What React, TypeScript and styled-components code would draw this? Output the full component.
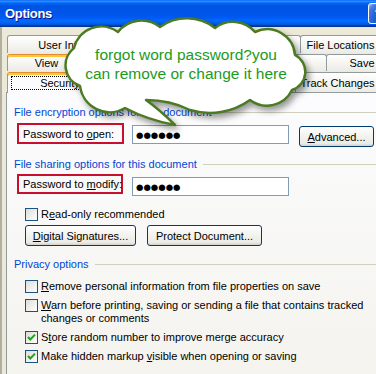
import { createGlobalStyle, styled } from "styled-components";

const GlobalStyle = createGlobalStyle`
	html, body {
		margin: 0;
		padding: 0;
		background: #f4f3ee;
		overflow: hidden;
	}
	body {
		font-family: "Liberation Sans", Arial, sans-serif;
		font-size: 11px;
		color: #000;
	}
`;

interface TabType {
	label: string;
	width: number;
	hot?: boolean;
	active?: boolean;
}

const TabRows: TabType[][] = [
	[
		{ label: "User Information", width: 144 },
		{ label: "Compatibility", width: 151 },
		{ label: "File Locations", width: 81 },
	],
	[
		{ label: "View", width: 79, hot: true },
		{ label: "General", width: 81 },
		{ label: "Edit", width: 61 },
		{ label: "Print", width: 102 },
		{ label: "Save", width: 72 },
	],
	[
		{ label: "Security", width: 106, hot: true, active: true },
		{ label: "Spelling & Grammar", width: 184 },
		{ label: "Track Changes", width: 85 },
	],
];

const RowHeights = [19, 18, 21];

// cloud outline, drawn in page coordinates (viewBox starts at 50,10)
const CLOUD =
	"M 80 86 A 22 22 0 0 1 74 48 A 28 28 0 0 1 118 32 A 30 30 0 0 1 160 27 " +
	"A 46 46 0 0 1 215 28 A 29 29 0 0 1 255 32 A 28 28 0 0 1 295 55 " +
	"A 19 19 0 0 1 292 90 A 28 28 0 0 1 250 100 A 69 69 0 0 1 190 110 " +
	"Q 170 100 146 100 Q 160 110 175 125 Q 148 120 125 108 " +
	"A 30 30 0 0 1 80 86 Z";

const Check = () => (
	<svg width="11" height="11" viewBox="0 0 11 11">
		<path d="M2 5 L4.3 7.5 L9 2.6" fill="none" stroke="#21a121" strokeWidth="2" />
	</svg>
);

interface CheckItemProps {
	checked?: boolean;
	top: number;
	children: React.ReactNode;
}

const CheckItem = ({ checked, top, children }: CheckItemProps) => (
	<CheckRow $top={top}>
		<CheckBox>{checked && <Check />}</CheckBox>
		<CheckLabel>{children}</CheckLabel>
	</CheckRow>
);

const App = () => {
	return (
		<Viewport>
			<GlobalStyle />
			<Window>
				<TitleBar>
					<Title>Options</Title>
					<HelpButton>?</HelpButton>
				</TitleBar>
				<Body>
					{TabRows.map((row, i) => (
						<TabRow key={i} $h={RowHeights[i]}>
							{row.map((tab) => (
								<Tab key={tab.label} $w={tab.width} $hot={tab.hot} $active={tab.active}>
									{tab.active ? <Focus>{tab.label}</Focus> : tab.label}
								</Tab>
							))}
						</TabRow>
					))}
					<Page>
						<GroupHeader $top={12}>File encryption options for this document</GroupHeader>
						<FieldRow $top={4}>
							<RedBox $w={107} $h={21}>
								<span>
									Password to <u>o</u>pen:
								</span>
							</RedBox>
							<PasswordBox $left={8} $top={2}>
								●●●●●●
							</PasswordBox>
							<XPButton $w={75} $left={10} $top={3}>
								<u>A</u>dvanced...
							</XPButton>
						</FieldRow>
						<GroupHeader $top={10}>File sharing options for this document</GroupHeader>
						<FieldRow $top={3}>
							<RedBox $w={106} $h={20}>
								<span>
									Password to <u>m</u>odify:
								</span>
							</RedBox>
							<PasswordBox $left={9} $top={3}>
								●●●●●●
							</PasswordBox>
						</FieldRow>
						<CheckItem top={12}>
							R<u>e</u>ad-only recommended
						</CheckItem>
						<ButtonRow>
							<XPButton $w={111}>
								<u>D</u>igital Signatures...
							</XPButton>
							<XPButton $w={115} $left={11}>
								Protect Document...
							</XPButton>
						</ButtonRow>
						<GroupHeader $top={11}>Privacy options</GroupHeader>
						<CheckItem top={9}>
							<u>R</u>emove personal information from file properties on save
						</CheckItem>
						<CheckItem top={6}>
							<u>W</u>arn before printing, saving or sending a file that contains tracked
							<br />
							changes or comments
						</CheckItem>
						<CheckItem checked top={6}>
							S<u>t</u>ore random number to improve merge accuracy
						</CheckItem>
						<CheckItem checked top={6}>
							Make hidden markup <u>v</u>isible when opening or saving
						</CheckItem>
					</Page>
				</Body>
			</Window>
			<Bubble>
				<CloudSvg viewBox="50 10 265 120" width="265" height="120">
					<path d={CLOUD} fill="#fff" stroke="#4b7a22" strokeWidth="2.5" strokeLinejoin="round" />
				</CloudSvg>
				<BubbleText>
					forgot word password?you
					<br />
					can remove or change it here
				</BubbleText>
			</Bubble>
		</Viewport>
	);
};
export default App;

const Viewport = styled.div`
	position: relative;
	width: 376px;
	height: 374px;
	overflow: hidden;
`;

const Window = styled.div`
	width: 400px;
	height: 374px;
	display: flex;
	flex-direction: column;
`;

const TitleBar = styled.div`
	height: 27px;
	flex-shrink: 0;
	display: flex;
	align-items: center;
	justify-content: space-between;
	padding: 0 11px 0 5px;
	background: linear-gradient(
		180deg,
		#0058ee 0%,
		#3593ff 4%,
		#288eff 6%,
		#127dff 8%,
		#036ffc 10%,
		#0262ee 14%,
		#0057e5 20%,
		#0054e3 24%,
		#0055eb 56%,
		#005bf5 66%,
		#026afe 76%,
		#0062ef 86%,
		#0052d6 92%,
		#0040ab 94%,
		#003092 100%
	);
`;

const Title = styled.span`
	color: #fff;
	font-weight: bold;
	font-size: 13px;
	letter-spacing: -0.3px;
	text-shadow: 1px 1px #0f1089;
`;

const HelpButton = styled.div`
	width: 21px;
	height: 21px;
	box-sizing: border-box;
	border: 1px solid #fff;
	border-radius: 3px;
	background: radial-gradient(circle at 90% 90%, #0054e9 0%, #2263d5 55%, #4479e4 80%, #a3bbec 100%);
	color: #fff;
	font-weight: bold;
	font-size: 13px;
	display: flex;
	align-items: center;
	justify-content: center;
`;

const Body = styled.div`
	flex: 1;
	display: flex;
	flex-direction: column;
	background: #ece9d8;
	padding: 8px 0 0 4px;
	border-left: 2px solid #b2afa0;
`;

const TabRow = styled.div<{ $h: number }>`
	display: flex;
	align-items: flex-start;
	height: ${(p) => p.$h}px;
	margin-left: 1px;
	position: relative;
	z-index: 2;
`;

const Tab = styled.div<{ $w: number; $hot?: boolean; $active?: boolean }>`
	width: ${(p) => p.$w}px;
	height: ${(p) => (p.$active ? "100%" : "calc(100% - 1px)")};
	box-sizing: border-box;
	flex-shrink: 0;
	margin-right: -1px;
	border: 1px solid #919b9c;
	border-bottom: none;
	border-top-color: ${(p) => (p.$hot ? "#e68b2c" : "#919b9c")};
	border-radius: 3px 3px 0 0;
	box-shadow: ${(p) => (p.$hot ? "inset 0 2px 0 #ffc83c" : "none")};
	background: ${(p) => (p.$active ? "#fcfcfe" : "linear-gradient(#fffffe, #ecebe6)")};
	display: flex;
	align-items: center;
	justify-content: center;
	position: relative;
	z-index: ${(p) => (p.$active ? 3 : 1)};
	${(p) => (p.$active ? "padding: 0 3px 1px;" : "")}
`;

const Focus = styled.span`
	flex: 1;
	align-self: stretch;
	margin: 3px 0 2px;
	border: 1px dotted #000;
	display: flex;
	align-items: center;
	justify-content: center;
`;

const Page = styled.div`
	flex: 1;
	margin-top: -1px;
	border-top: 1px solid #919b9c;
	border-left: 1px solid #919b9c;
	background: linear-gradient(#fcfcfe, #f4f3ee);
	display: flex;
	flex-direction: column;
`;

const GroupHeader = styled.div<{ $top: number }>`
	display: flex;
	align-items: center;
	margin-top: ${(p) => p.$top}px;
	padding-left: 7px;
	line-height: 14px;
	color: #0046d5;
	white-space: nowrap;

	&::after {
		content: "";
		flex: 1;
		margin: 1px 20px 0 6px;
		border-top: 1px solid #d0d0bf;
	}
`;

const FieldRow = styled.div<{ $top: number }>`
	display: flex;
	align-items: flex-start;
	margin-top: ${(p) => p.$top}px;
	padding-left: 10px;
`;

const RedBox = styled.div<{ $w: number; $h: number }>`
	width: ${(p) => p.$w}px;
	height: ${(p) => p.$h}px;
	box-sizing: border-box;
	border: 2px solid #c8102e;
	padding-left: 4px;
	display: flex;
	align-items: center;
	white-space: nowrap;
`;

const PasswordBox = styled.div<{ $left: number; $top: number }>`
	width: 157px;
	height: 19px;
	box-sizing: border-box;
	margin: ${(p) => p.$top}px 0 0 ${(p) => p.$left}px;
	border: 1px solid #7f9db9;
	background: #fff;
	padding-left: 3px;
	display: flex;
	align-items: center;
	font-family: "DejaVu Sans", sans-serif;
	font-size: 8.5px;
`;

const XPButton = styled.button<{ $w: number; $left?: number; $top?: number }>`
	width: ${(p) => p.$w}px;
	height: 21px;
	margin: ${(p) => p.$top ?? 0}px 0 0 ${(p) => p.$left ?? 0}px;
	padding: 0;
	border: 1px solid #003c74;
	border-radius: 3px;
	background: linear-gradient(180deg, #fff 0%, #f4f4f0 40%, #ecebe6 86%, #d6d0c5 100%);
	font-family: inherit;
	font-size: 11px;
	color: #000;
`;

const ButtonRow = styled.div`
	display: flex;
	margin-top: 4px;
	padding-left: 18px;
`;

const CheckRow = styled.div<{ $top: number }>`
	display: flex;
	align-items: flex-start;
	margin-top: ${(p) => p.$top}px;
	padding-left: 18px;
`;

const CheckBox = styled.div`
	width: 13px;
	height: 13px;
	box-sizing: border-box;
	flex-shrink: 0;
	border: 1px solid #1c5180;
	background: linear-gradient(135deg, #dcdcd7 0%, #fff 100%);
	display: flex;
	align-items: center;
	justify-content: center;
`;

const CheckLabel = styled.div`
	margin-left: 3px;
	line-height: 13px;
	white-space: nowrap;
`;

const Bubble = styled.div`
	position: absolute;
	left: 50px;
	top: 10px;
	width: 265px;
	height: 120px;
	z-index: 10;
	pointer-events: none;
`;

const CloudSvg = styled.svg`
	position: absolute;
	left: 0;
	top: 0;
	overflow: visible;
	filter: drop-shadow(3px 4px 3px rgba(0, 0, 0, 0.4));
`;

const BubbleText = styled.div`
	position: absolute;
	left: 7px;
	right: 0;
	top: 35px;
	text-align: center;
	color: #229a22;
	font-family: "Liberation Sans", Arial, sans-serif;
	font-size: 15.5px;
	line-height: 19px;
	white-space: nowrap;
`;
